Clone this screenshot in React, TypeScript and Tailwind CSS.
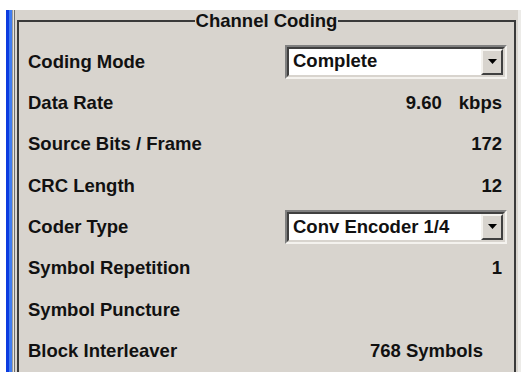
const rows: { label: string; kind: "select" | "value" | "none"; value?: string; unit?: string; inset?: boolean }[] = [
  { label: "Coding Mode", kind: "select", value: "Complete" },
  { label: "Data Rate", kind: "value", value: "9.60", unit: "kbps" },
  { label: "Source Bits / Frame", kind: "value", value: "172" },
  { label: "CRC Length", kind: "value", value: "12" },
  { label: "Coder Type", kind: "select", value: "Conv Encoder 1/4" },
  { label: "Symbol Repetition", kind: "value", value: "1" },
  { label: "Symbol Puncture", kind: "none" },
  { label: "Block Interleaver", kind: "value", value: "768 Symbols", inset: true },
];

const Select = ({ value }: { value: string }) => (
  <div className="w-[222px] h-[34px] border-2 border-t-[#808080] border-l-[#808080] border-b-[#f4f2ee] border-r-[#f4f2ee]">
    <div className="h-full flex items-center bg-white border-2 border-t-[#404040] border-l-[#404040] border-b-[#d8d4ce] border-r-[#d8d4ce]">
      <span className="flex-1 pl-[4px] leading-none">{value}</span>
      <div className="w-[22px] h-full flex items-center justify-center bg-[#d8d4ce] border-2 border-t-[#f4f2ee] border-l-[#f4f2ee] border-b-[#404040] border-r-[#404040]">
        <svg width="9" height="5" viewBox="0 0 9 5">
          <path d="M0 0 H9 L4.5 5 Z" fill="#000" />
        </svg>
      </div>
    </div>
  </div>
);

export default function App() {
  return (
    <div className="w-[521px] h-[372px] overflow-hidden bg-white flex flex-col font-['Liberation_Sans',Arial,sans-serif] font-bold text-[18.5px] text-[#111]">
      <div className="mt-[10px] ml-[6px] flex flex-1">
        {/* side stripe */}
        <div className="w-[3px] bg-[#0c3ce0]" />
        <div className="w-[3px] bg-[#3f7cf2]" />
        <div className="w-[1px] bg-[#9c9c9c]" />
        <div className="w-[1px] bg-[#e6e4e0]" />
        <div className="w-[1px] bg-[#6e6e6e]" />

        <div className="flex-1 flex flex-col bg-[#d8d4ce] pl-[2px] pr-[2px]">
          {/* group frame header */}
          <div className="flex h-[22px]">
            <div className="flex-1 mt-[10px] border-t-2 border-l-2 border-[#3a3a3a]" />
            <span className="leading-[22px] px-[1px]">Channel Coding</span>
            <div className="flex-1 mt-[10px] border-t-2 border-r-2 border-[#3a3a3a]" />
          </div>

          <div className="flex-1 border-x-2 border-[#3a3a3a] pt-[9px] pl-[9px] pr-[7px]">
            {rows.map((r) => (
              <div key={r.label} className="h-[41.3px] flex items-center justify-between">
                <span>{r.label}</span>
                {r.kind === "select" && <Select value={r.value!} />}
                {r.kind === "value" && (
                  <div className={r.inset ? "mr-[24px] flex gap-[17px]" : "mr-[5px] flex gap-[17px]"}>
                    <span>{r.value}</span>
                    {r.unit && <span>{r.unit}</span>}
                  </div>
                )}
              </div>
            ))}
          </div>
        </div>
        <div className="w-[3px] bg-[#ecebe8]" />
      </div>
    </div>
  );
}
